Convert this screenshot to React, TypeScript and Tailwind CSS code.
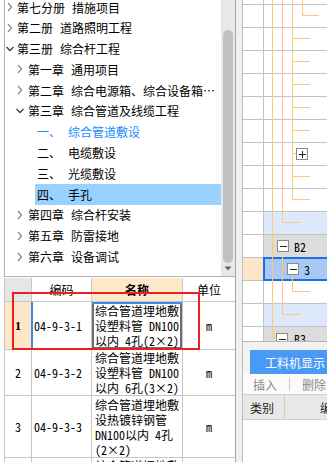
import React from 'react';

type TreeItem = {
  level: 1 | 2 | 3;
  head: string;
  title: string;
  open?: boolean;
  active?: boolean;
  selected?: boolean;
};

const tree: TreeItem[] = [
  { level: 1, head: '第七分册', title: '措施项目' },
  { level: 1, head: '第二册', title: '道路照明工程' },
  { level: 1, head: '第三册', title: '综合杆工程', open: true },
  { level: 2, head: '第一章', title: '通用项目' },
  { level: 2, head: '第二章', title: '综合电源箱、综合设备箱…' },
  { level: 2, head: '第三章', title: '综合管道及线缆工程', open: true },
  { level: 3, head: '一、', title: '综合管道敷设', active: true },
  { level: 3, head: '二、', title: '电缆敷设' },
  { level: 3, head: '三、', title: '光缆敷设' },
  { level: 3, head: '四、', title: '手孔', selected: true },
  { level: 2, head: '第四章', title: '综合杆安装' },
  { level: 2, head: '第五章', title: '防雷接地' },
  { level: 2, head: '第六章', title: '设备调试' },
];

const rows = [
  { no: '1', code: '04-9-3-1', name: ['综合管道埋地敷', '设塑料管 DN100', '以内 4孔(2×2)'], unit: 'm', h: 'h-[48px]', sel: true },
  { no: '2', code: '04-9-3-2', name: ['综合管道埋地敷', '设塑料管 DN100', '以内 6孔(3×2)'], unit: 'm', h: 'h-[46px]' },
  { no: '3', code: '04-9-3-3', name: ['综合管道埋地敷', '设热镀锌钢管', 'DN100以内 4孔', '(2×2)'], unit: 'm', h: 'h-[62px]' },
  { no: '', code: '', name: ['综合管道埋地敷'], unit: '', h: 'h-[20px]' },
];

const Chevron = ({ open }: { open?: boolean }) =>
  open ? (
    <svg width="10" height="10" viewBox="0 0 10 10">
      <path d="M1.5 3 L5 6.5 L8.5 3" fill="none" stroke="#3c3c3c" strokeWidth="1.3" />
    </svg>
  ) : (
    <svg width="10" height="10" viewBox="0 0 10 10">
      <path d="M3 1 L6.5 5 L3 9" fill="none" stroke="#8c8c8c" strokeWidth="1.3" />
    </svg>
  );

const TreeRow = ({ item }: { item: TreeItem }) => {
  if (item.level === 3) {
    return (
      <div className="h-[20.8px] flex pl-[30px]">
        <div
          className={`flex-1 flex items-center pl-[2px] whitespace-nowrap ${item.selected ? 'bg-[#99d1ff]' : ''} ${
            item.active ? 'text-[#1a8cff]' : 'text-black'
          }`}
        >
          <span>{item.head}</span>
          <span className="ml-[7px]">{item.title}</span>
        </div>
      </div>
    );
  }
  return (
    <div className="h-[20.8px] flex items-center whitespace-nowrap text-black">
      <div className={item.level === 1 ? 'w-[12px] flex' : 'ml-[10px] w-[13px] flex'}>
        <Chevron open={item.open} />
      </div>
      <span>{item.head}</span>
      <span className="ml-[7px]">{item.title}</span>
    </div>
  );
};

const BoxIcon = ({ plus }: { plus?: boolean }) => (
  <div className="relative z-10 w-[12px] h-[12px] border border-[#8a8a8a] bg-white flex items-center justify-center shrink-0">
    <svg width="10" height="10" viewBox="0 0 10 10" shapeRendering="crispEdges">
      <path d="M1.5 5.5 H8.5" stroke="#222" strokeWidth="1" />
      {plus && <path d="M5 1.5 V9" stroke="#222" strokeWidth="1" />}
    </svg>
  </div>
);

// orange connector lines of the right-hand tree grid
const TreeLines = () => {
  const cy = (r: number) => 23 * r - 7.5;
  const c = '#ffc87c';
  const branches = [2, 3, 4, 5, 6, 8, 9];
  return (
    <svg className="absolute left-0 top-0 pointer-events-none" width="84" height="342" shapeRendering="crispEdges">
      <g stroke={c} strokeWidth="1" fill="none">
        <path d={`M29.5 0 V${cy(15)} H33`} />
        <path d={`M29.5 ${cy(11)} H34`} />
        <path d={`M39.5 0 V${cy(10)} H56.5`} />
        <path d={`M39.5 252 V${cy(14)} H56.5`} />
        <path d={`M39.5 ${cy(12)} H44`} />
        <path d={`M49.5 0 V${cy(9)}`} />
        {branches.map(r => (
          <path key={r} d={`M49.5 ${cy(r)} H66.5`} />
        ))}
        <path d={`M49.5 ${cy(7)} H53`} />
        <path d={`M49.5 275 V${cy(13)} H66.5`} />
        <path d={`M59.5 0 V${cy(1)} H75.5`} />
      </g>
    </svg>
  );
};

const GridRow = ({ idx }: { idx: number }) => {
  if (idx === 12) {
    return (
      <div className="h-[23px] flex items-start">
        <div className="w-[21px] h-[23px] bg-[#fde6c8] border-r border-b border-[#c2c2c2]" />
        <div className="flex-1 -ml-[1px] -mt-[1px] h-[24px] border-2 border-[#1b6fe6] bg-[#a9c9f5] flex items-center pl-[22px]">
          <BoxIcon />
          <span className="ml-[5px] text-black">3</span>
        </div>
      </div>
    );
  }
  let bg = 'bg-white';
  if (idx === 10 || idx === 14) bg = 'bg-[#dde9fb]';
  if (idx === 11 || idx === 15) bg = 'bg-[#dcdcdc]';
  return (
    <div className="h-[23px] flex border-b border-[#c2c2c2] shrink-0">
      <div className="w-[21px] border-r border-[#c2c2c2] bg-white" />
      <div className={`flex-1 flex ${bg} ${idx === 15 ? 'items-start pt-[4px] pl-[12px]' : 'items-center'}`}>
        {idx === 7 && (
          <div className="ml-[32px]">
            <BoxIcon plus />
          </div>
        )}
        {idx === 11 && (
          <div className="ml-[13px] flex items-center">
            <BoxIcon />
            <span className="ml-[5px] text-black">B2</span>
          </div>
        )}
        {idx === 15 && (
          <div className="flex items-center">
            <BoxIcon />
            <span className="ml-[6px] text-black">B3</span>
          </div>
        )}
      </div>
    </div>
  );
};

export default function App() {
  return (
    <div className="relative w-[327px] h-[462px] overflow-hidden bg-white flex text-[12px] leading-[15px] font-['Noto_Sans_Mono_CJK_SC','Noto_Sans_CJK_SC',sans-serif]">
      {/* left: chapter tree + quota table */}
      <div className="w-[236px] h-full flex flex-col pl-[4px] border-r border-[#a6a6a6] shrink-0">
        <div className="h-[277px] flex border-l border-b border-[#b0b0b0] shrink-0">
          <div className="flex-1 overflow-hidden">
            <div className="-mt-[3.4px]">
              {tree.map((t, i) => (
                <TreeRow key={i} item={t} />
              ))}
            </div>
          </div>
          <div className="w-[14px] bg-[#e8e8e8] flex flex-col items-center pt-[30px]">
            <div className="w-[10px] h-[233px] rounded-full bg-[#c1c1c1]" />
            <svg width="8" height="5" viewBox="0 0 8 5" className="mt-[3px]">
              <path d="M0.5 0.5 H7.5 L4 4.5 Z" fill="#616161" />
            </svg>
          </div>
        </div>

        <div className="mt-[1px] flex flex-col border-l border-[#c6c6c6]">
          <div className="h-[24px] flex border-b border-[#c6c6c6] shrink-0">
            <div className="w-[27px] bg-[#e6e6e6] border-r border-[#c6c6c6]" />
            <div className="w-[60px] border-r border-[#c6c6c6] flex items-center justify-center">编码</div>
            <div className="w-[91px] bg-[#fde8c9] border-r border-[#c6c6c6] flex items-center justify-center font-bold">名称</div>
            <div className="flex-1 flex items-center justify-center">单位</div>
          </div>
          {rows.map((r, i) => (
            <div key={i} className={`${r.h} flex border-b border-[#c6c6c6] shrink-0`}>
              <div
                className={`w-[27px] border-r flex items-center justify-center ${
                  r.sel
                    ? "bg-[#fde6c8] border-[#3d8be8] font-['Liberation_Serif',serif] font-bold text-[13px]"
                    : 'border-[#c6c6c6]'
                }`}
              >
                {r.no}
              </div>
              <div
                className={`w-[60px] border-r border-[#c6c6c6] flex items-center pl-[2px] whitespace-nowrap ${
                  r.sel ? 'shadow-[inset_1px_0_0_0_#3d8be8]' : ''
                }`}
              >
                {r.code}
              </div>
              <div
                className={`w-[91px] border-r border-[#c6c6c6] flex flex-col ${i === 3 ? 'justify-start' : 'justify-center'} pl-[3px] overflow-hidden whitespace-nowrap ${
                  r.sel ? 'shadow-[inset_0_2px_0_0_#3d8be8,inset_0_0_0_2px_#6e6e6e]' : ''
                }`}
              >
                {r.name.map((l, j) => (
                  <span key={j}>{l}</span>
                ))}
              </div>
              <div className="flex-1 flex items-center justify-center">{r.unit}</div>
            </div>
          ))}
        </div>
      </div>

      {/* splitter */}
      <div className="w-[6px] h-full bg-[#f0f0f0] shrink-0" />

      {/* right: bill structure grid + resource panel */}
      <div className="flex-1 h-full flex flex-col border-l border-[#bdbdbd] bg-white">
        <div className="relative h-[342px] overflow-hidden border-b border-[#b4b4b4] shrink-0">
          <div className="h-[5px] border-b border-[#c2c2c2] flex">
            <div className="w-[21px] border-r border-[#c2c2c2]" />
          </div>
          {Array.from({ length: 15 }, (_, k) => (
            <GridRow key={k} idx={k + 1} />
          ))}
          <TreeLines />
        </div>
        <div className="h-[8px] bg-[#f2f2f2] shrink-0" />
        <div className="h-[24px] flex bg-[#f4f4f4] shrink-0">
          <div className="w-[7px]" />
          <div className="flex-1 bg-[#4a9af5] text-white flex items-center pl-[15px] whitespace-nowrap overflow-hidden text-[12px]">
            工料机显示
          </div>
        </div>
        <div className="h-[20px] flex items-center pl-[10px] text-[#8a8a8a] whitespace-nowrap bg-[#fbfbfb] shrink-0">
          <span>插入</span>
          <span className="ml-[12px] w-px h-[13px] bg-[#c8c8c8]" />
          <span className="ml-[12px]">删除</span>
        </div>
        <div className="h-[26px] flex bg-[#e8e8e8] border-t border-b border-[#d2d2d2] text-[#222] shrink-0">
          <div className="w-[42px] border-r border-[#cfcfcf] flex items-center pl-[7px]">类别</div>
          <div className="flex-1 flex items-center pl-[35px] whitespace-nowrap overflow-hidden">编码</div>
        </div>
        <div className="flex-1 bg-white" />
      </div>

      {/* red annotation box */}
      <div className="absolute left-[12px] top-[292px] w-[188px] h-[58px] border-2 border-[#f01e1e]" />
    </div>
  );
}
